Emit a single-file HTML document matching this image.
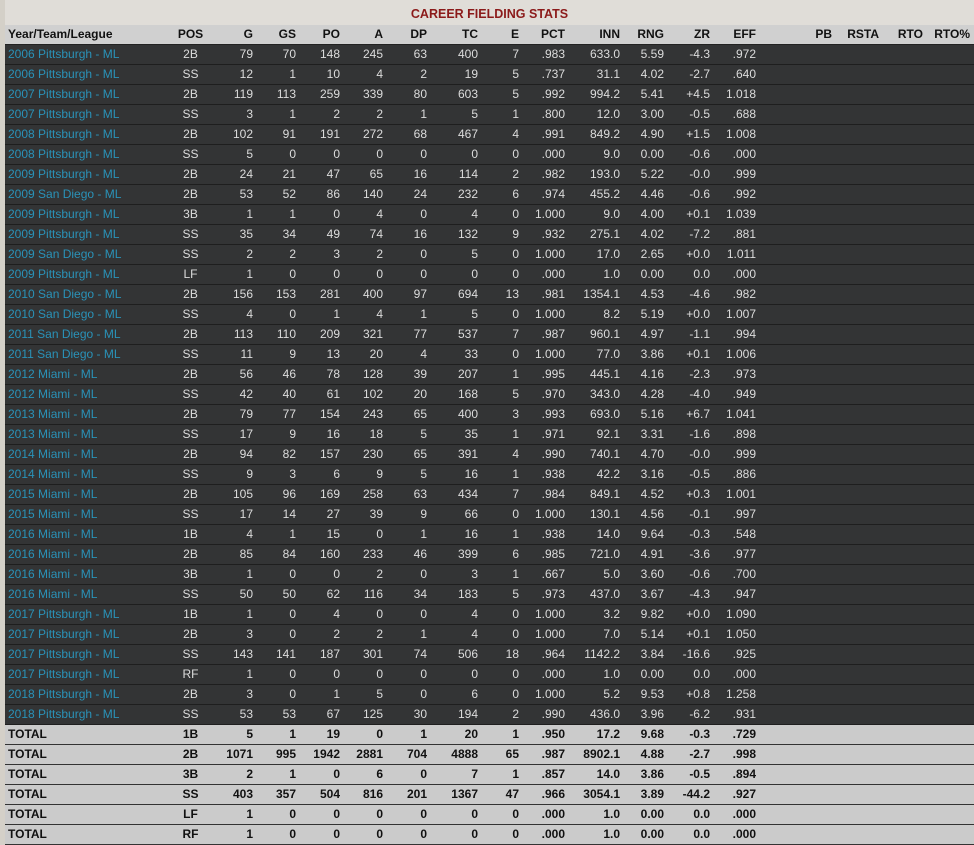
<!DOCTYPE html>
<html><head><meta charset="utf-8"><style>
html,body{margin:0;padding:0;width:974px;height:842px;overflow:hidden;background:#d4d0c8;font-family:"Liberation Sans",Arial,sans-serif;font-size:12px}
.wrap{position:absolute;left:5px;top:0;width:969px;height:842px;background:#e0ddd8}
.title{position:absolute;left:0;top:5px;width:969px;text-align:center;color:#8b1a1a;font-weight:bold;font-size:12.5px;height:19px;line-height:19px}
table{position:absolute;left:0;top:25px;border-collapse:collapse;table-layout:fixed;width:969px}
td{height:19px;padding:0 1px 0 0;text-align:right;white-space:nowrap;overflow:hidden;line-height:19px}
tr.h td{background:#d0d0d0;color:#111;font-weight:bold;border-bottom:1px solid #222}
tr.d td{background:#333435;color:#dcdcdc;border-bottom:1px solid #1e1e1e}
tr.t td{background:#cbcbcb;color:#111;font-weight:bold;border-bottom:1px solid #333}
td.n{text-align:left;padding-left:3px}
tr.d td.n{color:#2a92b8}
td.p{text-align:center}
</style></head><body><div class="wrap">
<div class="title">CAREER FIELDING STATS</div>
<table>
<colgroup><col style="width:165px"><col style="width:42px"><col style="width:42px"><col style="width:43px"><col style="width:44px"><col style="width:43px"><col style="width:44px"><col style="width:51px"><col style="width:41px"><col style="width:46px"><col style="width:55px"><col style="width:44px"><col style="width:46px"><col style="width:46px"><col style="width:76px"><col style="width:47px"><col style="width:44px"><col style="width:50px"></colgroup>
<tr class="h"><td class="n">Year/Team/League</td><td class="p">POS</td><td>G</td><td>GS</td><td>PO</td><td>A</td><td>DP</td><td>TC</td><td>E</td><td>PCT</td><td>INN</td><td>RNG</td><td>ZR</td><td>EFF</td><td>PB</td><td>RSTA</td><td>RTO</td><td style="padding-right:4px">RTO%</td></tr>
<tr class="d"><td class="n">2006 Pittsburgh - ML</td><td class="p">2B</td><td>79</td><td>70</td><td>148</td><td>245</td><td>63</td><td>400</td><td>7</td><td>.983</td><td>633.0</td><td>5.59</td><td>-4.3</td><td>.972</td><td></td><td></td><td></td><td></td></tr>
<tr class="d"><td class="n">2006 Pittsburgh - ML</td><td class="p">SS</td><td>12</td><td>1</td><td>10</td><td>4</td><td>2</td><td>19</td><td>5</td><td>.737</td><td>31.1</td><td>4.02</td><td>-2.7</td><td>.640</td><td></td><td></td><td></td><td></td></tr>
<tr class="d"><td class="n">2007 Pittsburgh - ML</td><td class="p">2B</td><td>119</td><td>113</td><td>259</td><td>339</td><td>80</td><td>603</td><td>5</td><td>.992</td><td>994.2</td><td>5.41</td><td>+4.5</td><td>1.018</td><td></td><td></td><td></td><td></td></tr>
<tr class="d"><td class="n">2007 Pittsburgh - ML</td><td class="p">SS</td><td>3</td><td>1</td><td>2</td><td>2</td><td>1</td><td>5</td><td>1</td><td>.800</td><td>12.0</td><td>3.00</td><td>-0.5</td><td>.688</td><td></td><td></td><td></td><td></td></tr>
<tr class="d"><td class="n">2008 Pittsburgh - ML</td><td class="p">2B</td><td>102</td><td>91</td><td>191</td><td>272</td><td>68</td><td>467</td><td>4</td><td>.991</td><td>849.2</td><td>4.90</td><td>+1.5</td><td>1.008</td><td></td><td></td><td></td><td></td></tr>
<tr class="d"><td class="n">2008 Pittsburgh - ML</td><td class="p">SS</td><td>5</td><td>0</td><td>0</td><td>0</td><td>0</td><td>0</td><td>0</td><td>.000</td><td>9.0</td><td>0.00</td><td>-0.6</td><td>.000</td><td></td><td></td><td></td><td></td></tr>
<tr class="d"><td class="n">2009 Pittsburgh - ML</td><td class="p">2B</td><td>24</td><td>21</td><td>47</td><td>65</td><td>16</td><td>114</td><td>2</td><td>.982</td><td>193.0</td><td>5.22</td><td>-0.0</td><td>.999</td><td></td><td></td><td></td><td></td></tr>
<tr class="d"><td class="n">2009 San Diego - ML</td><td class="p">2B</td><td>53</td><td>52</td><td>86</td><td>140</td><td>24</td><td>232</td><td>6</td><td>.974</td><td>455.2</td><td>4.46</td><td>-0.6</td><td>.992</td><td></td><td></td><td></td><td></td></tr>
<tr class="d"><td class="n">2009 Pittsburgh - ML</td><td class="p">3B</td><td>1</td><td>1</td><td>0</td><td>4</td><td>0</td><td>4</td><td>0</td><td>1.000</td><td>9.0</td><td>4.00</td><td>+0.1</td><td>1.039</td><td></td><td></td><td></td><td></td></tr>
<tr class="d"><td class="n">2009 Pittsburgh - ML</td><td class="p">SS</td><td>35</td><td>34</td><td>49</td><td>74</td><td>16</td><td>132</td><td>9</td><td>.932</td><td>275.1</td><td>4.02</td><td>-7.2</td><td>.881</td><td></td><td></td><td></td><td></td></tr>
<tr class="d"><td class="n">2009 San Diego - ML</td><td class="p">SS</td><td>2</td><td>2</td><td>3</td><td>2</td><td>0</td><td>5</td><td>0</td><td>1.000</td><td>17.0</td><td>2.65</td><td>+0.0</td><td>1.011</td><td></td><td></td><td></td><td></td></tr>
<tr class="d"><td class="n">2009 Pittsburgh - ML</td><td class="p">LF</td><td>1</td><td>0</td><td>0</td><td>0</td><td>0</td><td>0</td><td>0</td><td>.000</td><td>1.0</td><td>0.00</td><td>0.0</td><td>.000</td><td></td><td></td><td></td><td></td></tr>
<tr class="d"><td class="n">2010 San Diego - ML</td><td class="p">2B</td><td>156</td><td>153</td><td>281</td><td>400</td><td>97</td><td>694</td><td>13</td><td>.981</td><td>1354.1</td><td>4.53</td><td>-4.6</td><td>.982</td><td></td><td></td><td></td><td></td></tr>
<tr class="d"><td class="n">2010 San Diego - ML</td><td class="p">SS</td><td>4</td><td>0</td><td>1</td><td>4</td><td>1</td><td>5</td><td>0</td><td>1.000</td><td>8.2</td><td>5.19</td><td>+0.0</td><td>1.007</td><td></td><td></td><td></td><td></td></tr>
<tr class="d"><td class="n">2011 San Diego - ML</td><td class="p">2B</td><td>113</td><td>110</td><td>209</td><td>321</td><td>77</td><td>537</td><td>7</td><td>.987</td><td>960.1</td><td>4.97</td><td>-1.1</td><td>.994</td><td></td><td></td><td></td><td></td></tr>
<tr class="d"><td class="n">2011 San Diego - ML</td><td class="p">SS</td><td>11</td><td>9</td><td>13</td><td>20</td><td>4</td><td>33</td><td>0</td><td>1.000</td><td>77.0</td><td>3.86</td><td>+0.1</td><td>1.006</td><td></td><td></td><td></td><td></td></tr>
<tr class="d"><td class="n">2012 Miami - ML</td><td class="p">2B</td><td>56</td><td>46</td><td>78</td><td>128</td><td>39</td><td>207</td><td>1</td><td>.995</td><td>445.1</td><td>4.16</td><td>-2.3</td><td>.973</td><td></td><td></td><td></td><td></td></tr>
<tr class="d"><td class="n">2012 Miami - ML</td><td class="p">SS</td><td>42</td><td>40</td><td>61</td><td>102</td><td>20</td><td>168</td><td>5</td><td>.970</td><td>343.0</td><td>4.28</td><td>-4.0</td><td>.949</td><td></td><td></td><td></td><td></td></tr>
<tr class="d"><td class="n">2013 Miami - ML</td><td class="p">2B</td><td>79</td><td>77</td><td>154</td><td>243</td><td>65</td><td>400</td><td>3</td><td>.993</td><td>693.0</td><td>5.16</td><td>+6.7</td><td>1.041</td><td></td><td></td><td></td><td></td></tr>
<tr class="d"><td class="n">2013 Miami - ML</td><td class="p">SS</td><td>17</td><td>9</td><td>16</td><td>18</td><td>5</td><td>35</td><td>1</td><td>.971</td><td>92.1</td><td>3.31</td><td>-1.6</td><td>.898</td><td></td><td></td><td></td><td></td></tr>
<tr class="d"><td class="n">2014 Miami - ML</td><td class="p">2B</td><td>94</td><td>82</td><td>157</td><td>230</td><td>65</td><td>391</td><td>4</td><td>.990</td><td>740.1</td><td>4.70</td><td>-0.0</td><td>.999</td><td></td><td></td><td></td><td></td></tr>
<tr class="d"><td class="n">2014 Miami - ML</td><td class="p">SS</td><td>9</td><td>3</td><td>6</td><td>9</td><td>5</td><td>16</td><td>1</td><td>.938</td><td>42.2</td><td>3.16</td><td>-0.5</td><td>.886</td><td></td><td></td><td></td><td></td></tr>
<tr class="d"><td class="n">2015 Miami - ML</td><td class="p">2B</td><td>105</td><td>96</td><td>169</td><td>258</td><td>63</td><td>434</td><td>7</td><td>.984</td><td>849.1</td><td>4.52</td><td>+0.3</td><td>1.001</td><td></td><td></td><td></td><td></td></tr>
<tr class="d"><td class="n">2015 Miami - ML</td><td class="p">SS</td><td>17</td><td>14</td><td>27</td><td>39</td><td>9</td><td>66</td><td>0</td><td>1.000</td><td>130.1</td><td>4.56</td><td>-0.1</td><td>.997</td><td></td><td></td><td></td><td></td></tr>
<tr class="d"><td class="n">2016 Miami - ML</td><td class="p">1B</td><td>4</td><td>1</td><td>15</td><td>0</td><td>1</td><td>16</td><td>1</td><td>.938</td><td>14.0</td><td>9.64</td><td>-0.3</td><td>.548</td><td></td><td></td><td></td><td></td></tr>
<tr class="d"><td class="n">2016 Miami - ML</td><td class="p">2B</td><td>85</td><td>84</td><td>160</td><td>233</td><td>46</td><td>399</td><td>6</td><td>.985</td><td>721.0</td><td>4.91</td><td>-3.6</td><td>.977</td><td></td><td></td><td></td><td></td></tr>
<tr class="d"><td class="n">2016 Miami - ML</td><td class="p">3B</td><td>1</td><td>0</td><td>0</td><td>2</td><td>0</td><td>3</td><td>1</td><td>.667</td><td>5.0</td><td>3.60</td><td>-0.6</td><td>.700</td><td></td><td></td><td></td><td></td></tr>
<tr class="d"><td class="n">2016 Miami - ML</td><td class="p">SS</td><td>50</td><td>50</td><td>62</td><td>116</td><td>34</td><td>183</td><td>5</td><td>.973</td><td>437.0</td><td>3.67</td><td>-4.3</td><td>.947</td><td></td><td></td><td></td><td></td></tr>
<tr class="d"><td class="n">2017 Pittsburgh - ML</td><td class="p">1B</td><td>1</td><td>0</td><td>4</td><td>0</td><td>0</td><td>4</td><td>0</td><td>1.000</td><td>3.2</td><td>9.82</td><td>+0.0</td><td>1.090</td><td></td><td></td><td></td><td></td></tr>
<tr class="d"><td class="n">2017 Pittsburgh - ML</td><td class="p">2B</td><td>3</td><td>0</td><td>2</td><td>2</td><td>1</td><td>4</td><td>0</td><td>1.000</td><td>7.0</td><td>5.14</td><td>+0.1</td><td>1.050</td><td></td><td></td><td></td><td></td></tr>
<tr class="d"><td class="n">2017 Pittsburgh - ML</td><td class="p">SS</td><td>143</td><td>141</td><td>187</td><td>301</td><td>74</td><td>506</td><td>18</td><td>.964</td><td>1142.2</td><td>3.84</td><td>-16.6</td><td>.925</td><td></td><td></td><td></td><td></td></tr>
<tr class="d"><td class="n">2017 Pittsburgh - ML</td><td class="p">RF</td><td>1</td><td>0</td><td>0</td><td>0</td><td>0</td><td>0</td><td>0</td><td>.000</td><td>1.0</td><td>0.00</td><td>0.0</td><td>.000</td><td></td><td></td><td></td><td></td></tr>
<tr class="d"><td class="n">2018 Pittsburgh - ML</td><td class="p">2B</td><td>3</td><td>0</td><td>1</td><td>5</td><td>0</td><td>6</td><td>0</td><td>1.000</td><td>5.2</td><td>9.53</td><td>+0.8</td><td>1.258</td><td></td><td></td><td></td><td></td></tr>
<tr class="d"><td class="n">2018 Pittsburgh - ML</td><td class="p">SS</td><td>53</td><td>53</td><td>67</td><td>125</td><td>30</td><td>194</td><td>2</td><td>.990</td><td>436.0</td><td>3.96</td><td>-6.2</td><td>.931</td><td></td><td></td><td></td><td></td></tr>
<tr class="t"><td class="n">TOTAL</td><td class="p">1B</td><td>5</td><td>1</td><td>19</td><td>0</td><td>1</td><td>20</td><td>1</td><td>.950</td><td>17.2</td><td>9.68</td><td>-0.3</td><td>.729</td><td></td><td></td><td></td><td></td></tr>
<tr class="t"><td class="n">TOTAL</td><td class="p">2B</td><td>1071</td><td>995</td><td>1942</td><td>2881</td><td>704</td><td>4888</td><td>65</td><td>.987</td><td>8902.1</td><td>4.88</td><td>-2.7</td><td>.998</td><td></td><td></td><td></td><td></td></tr>
<tr class="t"><td class="n">TOTAL</td><td class="p">3B</td><td>2</td><td>1</td><td>0</td><td>6</td><td>0</td><td>7</td><td>1</td><td>.857</td><td>14.0</td><td>3.86</td><td>-0.5</td><td>.894</td><td></td><td></td><td></td><td></td></tr>
<tr class="t"><td class="n">TOTAL</td><td class="p">SS</td><td>403</td><td>357</td><td>504</td><td>816</td><td>201</td><td>1367</td><td>47</td><td>.966</td><td>3054.1</td><td>3.89</td><td>-44.2</td><td>.927</td><td></td><td></td><td></td><td></td></tr>
<tr class="t"><td class="n">TOTAL</td><td class="p">LF</td><td>1</td><td>0</td><td>0</td><td>0</td><td>0</td><td>0</td><td>0</td><td>.000</td><td>1.0</td><td>0.00</td><td>0.0</td><td>.000</td><td></td><td></td><td></td><td></td></tr>
<tr class="t"><td class="n">TOTAL</td><td class="p">RF</td><td>1</td><td>0</td><td>0</td><td>0</td><td>0</td><td>0</td><td>0</td><td>.000</td><td>1.0</td><td>0.00</td><td>0.0</td><td>.000</td><td></td><td></td><td></td><td></td></tr>
</table>
</div></body></html>
